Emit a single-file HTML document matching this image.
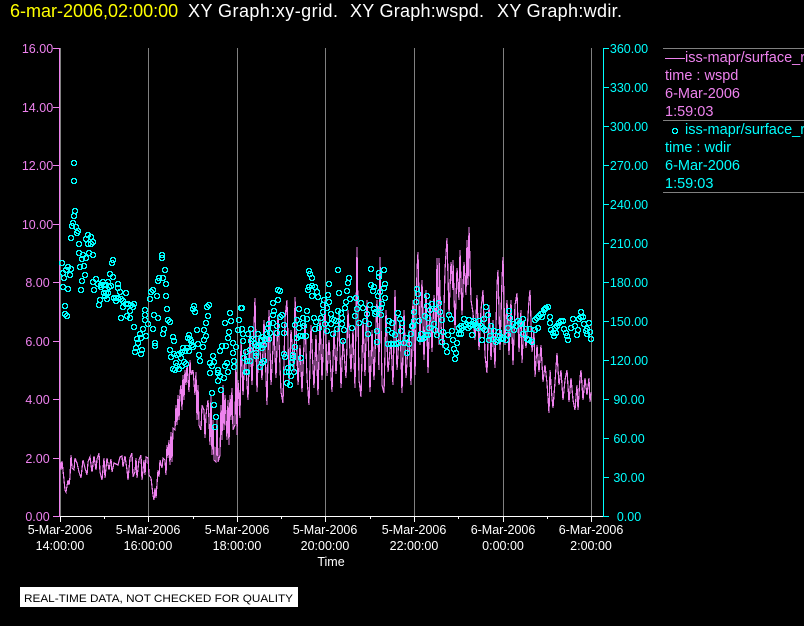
<!DOCTYPE html>
<html><head><meta charset="utf-8"><title>XY Graph</title>
<style>
html,body{margin:0;padding:0;background:#000;width:804px;height:626px;overflow:hidden}
svg{display:block}
text{font-family:"Liberation Sans",sans-serif}
.l{font-size:12.5px;fill:#ee82ee;text-anchor:middle}
.r{font-size:12.5px;fill:#0ff;text-anchor:middle}
.x{font-size:12.5px;fill:#fff;text-anchor:middle}
.g{font-size:14.5px}
</style></head><body>
<svg width="804" height="626" viewBox="0 0 804 626" xmlns="http://www.w3.org/2000/svg">
<defs><marker id="m" markerUnits="userSpaceOnUse" markerWidth="7" markerHeight="7" refX="2.5" refY="2.5" overflow="visible"><path shape-rendering="crispEdges" fill="#0ff" fill-rule="evenodd" d="M1 0H5V1H6V5H5V6H1V5H0V1H1ZM2 1H4V2H5V4H4V5H2V4H1V2H2Z"/></marker></defs>
<rect width="804" height="626" fill="#000"/>
<text x="10" y="17" font-size="18" fill="#ff0">6-mar-2006,02:00:00</text>
<text x="188" y="17" font-size="18" fill="#fff" textLength="150">XY Graph:xy-grid.</text>
<text x="350" y="17" font-size="18" fill="#fff" textLength="134">XY Graph:wspd.</text>
<text x="497" y="17" font-size="18" fill="#fff" textLength="125">XY Graph:wdir.</text>
<g fill="#808080"><rect x="60" y="48" width="1" height="468"/><rect x="148" y="48" width="1" height="468"/><rect x="237" y="48" width="1" height="468"/><rect x="325" y="48" width="1" height="468"/><rect x="414" y="48" width="1" height="468"/><rect x="503" y="48" width="1" height="468"/><rect x="591" y="48" width="1" height="468"/>
<rect x="663" y="48" width="141" height="1"/><rect x="663" y="120" width="141" height="1"/><rect x="663" y="192" width="141" height="1"/></g>
<rect x="59" y="48" width="1" height="469" fill="#ee82ee"/>
<g fill="#ee82ee"><rect x="53" y="48" width="6" height="1"/><rect x="53" y="107" width="6" height="1"/><rect x="53" y="165" width="6" height="1"/><rect x="53" y="224" width="6" height="1"/><rect x="53" y="282" width="6" height="1"/><rect x="53" y="341" width="6" height="1"/><rect x="53" y="399" width="6" height="1"/><rect x="53" y="458" width="6" height="1"/><rect x="53" y="516" width="6" height="1"/></g>
<g class="l"><text class="l" x="37.5" y="53">16.00</text><text class="l" x="37.5" y="112">14.00</text><text class="l" x="37.5" y="170">12.00</text><text class="l" x="37.5" y="229">10.00</text><text class="l" x="37.5" y="287">8.00</text><text class="l" x="37.5" y="346">6.00</text><text class="l" x="37.5" y="404">4.00</text><text class="l" x="37.5" y="463">2.00</text><text class="l" x="37.5" y="521">0.00</text></g>
<rect x="603" y="48" width="1" height="469" fill="#0ff"/>
<g fill="#0ff"><rect x="604" y="48" width="5" height="1"/><rect x="604" y="87" width="5" height="1"/><rect x="604" y="126" width="5" height="1"/><rect x="604" y="165" width="5" height="1"/><rect x="604" y="204" width="5" height="1"/><rect x="604" y="243" width="5" height="1"/><rect x="604" y="282" width="5" height="1"/><rect x="604" y="321" width="5" height="1"/><rect x="604" y="360" width="5" height="1"/><rect x="604" y="399" width="5" height="1"/><rect x="604" y="438" width="5" height="1"/><rect x="604" y="477" width="5" height="1"/><rect x="604" y="516" width="5" height="1"/></g>
<text class="r" x="629" y="53">360.00</text><text class="r" x="629" y="92">330.00</text><text class="r" x="629" y="131">300.00</text><text class="r" x="629" y="170">270.00</text><text class="r" x="629" y="209">240.00</text><text class="r" x="629" y="248">210.00</text><text class="r" x="629" y="287">180.00</text><text class="r" x="629" y="326">150.00</text><text class="r" x="629" y="365">120.00</text><text class="r" x="629" y="404">90.00</text><text class="r" x="629" y="443">60.00</text><text class="r" x="629" y="482">30.00</text><text class="r" x="629" y="521">0.00</text>
<rect x="60" y="516" width="543" height="1" fill="#fff"/>
<g fill="#fff"><rect x="60" y="517" width="1" height="5"/><rect x="148" y="517" width="1" height="5"/><rect x="237" y="517" width="1" height="5"/><rect x="325" y="517" width="1" height="5"/><rect x="414" y="517" width="1" height="5"/><rect x="503" y="517" width="1" height="5"/><rect x="591" y="517" width="1" height="5"/><rect x="104" y="517" width="1" height="2"/><rect x="193" y="517" width="1" height="2"/><rect x="281" y="517" width="1" height="2"/><rect x="370" y="517" width="1" height="2"/><rect x="458" y="517" width="1" height="2"/><rect x="547" y="517" width="1" height="2"/></g>
<text class="x" x="60" y="534">5-Mar-2006</text><text class="x" x="60" y="550">14:00:00</text>
<text class="x" x="148" y="534">5-Mar-2006</text><text class="x" x="148" y="550">16:00:00</text>
<text class="x" x="237" y="534">5-Mar-2006</text><text class="x" x="237" y="550">18:00:00</text>
<text class="x" x="325" y="534">5-Mar-2006</text><text class="x" x="325" y="550">20:00:00</text>
<text class="x" x="414" y="534">5-Mar-2006</text><text class="x" x="414" y="550">22:00:00</text>
<text class="x" x="503" y="534">6-Mar-2006</text><text class="x" x="503" y="550">0:00:00</text>
<text class="x" x="591" y="534">6-Mar-2006</text><text class="x" x="591" y="550">2:00:00</text>
<text class="x" x="331" y="566">Time</text>
<polyline fill="none" stroke="#ee82ee" stroke-width="1.2" shape-rendering="crispEdges" points="60,462 61,470 62,461 64,480 65,490 66,492 68,480 69,485 70,477 71,455 72,468 74,470 75,458 77,463 79,472 81,478 83,460 85,468 87,475 88,462 90,457 92,472 94,456 96,470 97,459 99,453 100,472 102,480 104,458 105,478 107,458 109,470 111,459 112,472 114,463 116,464 118,465 120,457 122,456 123,467 125,456 127,470 128,480 130,458 132,453 133,477 135,472 136,458 137,478 139,460 141,455 142,480 144,460 145,475 146,457 148,458 149,475 151,478 153,495 154,500 155,488 156,498 158,470 159,477 160,460 162,468 163,458 165,460 166,475 167,445 168,458 169,440 170,465 171,432 172,462 173,428 175,430 176,405 177,425 178,395 179,420 180,392 181,385 182,410 183,375 184,400 185,370 186,385 187,365 188,378 189,392 190,360 191,375 193,370 195,395 196,372 197,420 198,385 199,425 201,430 202,405 204,410 205,438 206,415 208,400 209,420 210,445 211,395 212,455 213,420 214,460 216,462 217,420 218,462 220,455 221,405 222,440 223,385 224,430 225,395 227,440 228,400 229,445 230,395 231,420 232,388 233,430 235,425 236,360 237,435 238,380 240,418 241,340 243,395 245,350 248,400 250,330 252,385 255,298 257,392 259,335 262,380 264,320 267,405 269,310 271,385 274,330 276,378 278,315 281,392 283,403 285,318 287,300 289,384 291,330 294,372 295,297 298,385 300,345 302,392 305,320 307,378 309,405 311,325 314,388 316,335 318,395 320,318 322,380 325,300 327,376 329,340 332,392 334,330 336,374 339,315 341,388 343,340 346,378 348,310 351,372 353,330 355,388 357,247 359,380 361,397 363,320 365,376 367,300 370,392 372,330 374,380 377,300 379,370 380,257 382,385 384,393 386,310 388,372 391,340 393,385 395,290 397,370 400,320 402,393 404,310 406,378 409,330 411,385 413,300 415,375 417,270 418,252 420,345 422,280 424,360 426,290 428,373 430,300 432,352 434,295 436,335 437,258 439,345 439,258 441,325 443,348 445,270 447,238 449,315 451,262 453,290 453,260 455,330 457,268 459,300 460,250 462,315 464,262 466,295 467,240 468,285 469,227 471,300 473,313 475,340 477,295 479,350 481,310 483,290 485,355 487,373 489,305 491,360 493,320 495,368 497,285 498,270 500,350 502,280 503,257 505,345 507,300 509,355 511,300 513,365 515,305 517,293 519,352 521,310 522,363 524,320 526,348 529,300 530,290 532,352 534,330 535,377 537,345 539,372 541,345 543,382 545,365 547,383 549,413 550,370 552,398 553,408 555,382 557,353 559,385 561,370 563,400 565,380 567,370 569,402 571,378 573,400 575,410 577,385 578,410 580,378 581,370 583,400 585,378 587,395 589,378 590,402 591,392"/>
<polyline fill="none" stroke="none" marker-start="url(#m)" marker-mid="url(#m)" marker-end="url(#m)" points="73.5,162.5 73.5,180.5 74.5,210.5 73.5,215.5 72.5,222.5 71.5,225.5 75.5,226.5 77.5,230.5 76.5,232.5 70.5,237.5 78.5,243.5 87.5,234.5 90.5,236.5 85.5,238.5 92.5,241.5 87.5,243.5 90.5,243.5 78.5,252.5 82.5,254.5 85.5,257.5 81.5,258.5 88.5,252.5 92.5,254.5 61.5,262.5 111.5,262.5 112.5,259.5 79.5,266.5 83.5,265.5 67.5,266.5 70.5,268.5 65.5,269.5 62.5,272.5 69.5,274.5 63.5,277.5 84.5,274.5 81.5,280.5 109.5,273.5 112.5,276.5 95.5,278.5 92.5,281.5 102.5,281.5 107.5,281.5 117.5,283.5 97.5,283.5 100.5,286.5 108.5,286.5 93.5,289.5 80.5,289.5 62.5,286.5 67.5,288.5 117.5,287.5 119.5,291.5 125.5,292.5 103.5,292.5 104.5,295.5 113.5,297.5 106.5,298.5 120.5,298.5 99.5,299.5 98.5,304.5 115.5,300.5 122.5,306.5 127.5,303.5 133.5,303.5 132.5,306.5 64.5,305.5 64.5,313.5 66.5,315.5 129.5,310.5 126.5,315.5 129.5,317.5 120.5,317.5 144.5,309.5 144.5,314.5 153.5,314.5 157.5,317.5 144.5,319.5 147.5,323.5 152.5,328.5 133.5,326.5 142.5,328.5 139.5,333.5 145.5,335.5 140.5,337.5 136.5,338.5 137.5,342.5 135.5,347.5 134.5,351.5 141.5,349.5 140.5,353.5 154.5,342.5 154.5,345.5 163.5,328.5 162.5,333.5 167.5,319.5 169.5,321.5 166.5,308.5 149.5,298.5 156.5,295.5 165.5,295.5 150.5,291.5 152.5,289.5 157.5,280.5 165.5,283.5 158.5,277.5 162.5,277.5 164.5,269.5 161.5,254.5 161.5,257.5 193.5,305.5 192.5,308.5 194.5,311.5 206.5,306.5 208.5,304.5 207.5,315.5 205.5,322.5 224.5,322.5 230.5,320.5 229.5,312.5 240.5,307.5 238.5,319.5 228.5,331.5 227.5,337.5 232.5,342.5 225.5,345.5 221.5,345.5 219.5,350.5 235.5,346.5 232.5,352.5 243.5,357.5 237.5,329.5 241.5,328.5 172.5,336.5 173.5,340.5 188.5,334.5 189.5,338.5 191.5,344.5 196.5,329.5 203.5,329.5 205.5,335.5 203.5,339.5 197.5,343.5 202.5,346.5 186.5,347.5 182.5,347.5 169.5,349.5 173.5,353.5 178.5,353.5 170.5,356.5 180.5,357.5 198.5,354.5 212.5,355.5 199.5,360.5 175.5,362.5 185.5,363.5 209.5,362.5 213.5,361.5 211.5,365.5 226.5,362.5 224.5,365.5 233.5,360.5 233.5,366.5 174.5,369.5 178.5,368.5 181.5,365.5 183.5,361.5 217.5,369.5 211.5,392.5 220.5,389.5 213.5,404.5 215.5,416.5 214.5,426.5 209.5,372.5 217.5,380.5 217.5,372.5 227.5,371.5 223.5,377.5 219.5,375.5 245.5,371.5 308.5,270.5 309.5,273.5 311.5,277.5 311.5,285.5 314.5,286.5 308.5,286.5 307.5,289.5 316.5,291.5 311.5,295.5 317.5,296.5 323.5,299.5 322.5,304.5 328.5,301.5 327.5,294.5 328.5,283.5 337.5,269.5 348.5,277.5 347.5,282.5 346.5,290.5 338.5,292.5 355.5,297.5 345.5,301.5 349.5,298.5 344.5,307.5 326.5,307.5 277.5,289.5 279.5,290.5 272.5,302.5 277.5,299.5 241.5,307.5 298.5,308.5 306.5,310.5 273.5,310.5 281.5,314.5 272.5,314.5 279.5,316.5 296.5,319.5 302.5,317.5 306.5,318.5 313.5,317.5 315.5,321.5 322.5,311.5 320.5,317.5 330.5,313.5 337.5,310.5 340.5,312.5 341.5,317.5 335.5,320.5 294.5,324.5 298.5,327.5 303.5,325.5 302.5,322.5 314.5,328.5 318.5,327.5 324.5,323.5 330.5,323.5 336.5,328.5 341.5,323.5 343.5,329.5 326.5,330.5 332.5,333.5 272.5,322.5 268.5,323.5 283.5,324.5 276.5,325.5 267.5,327.5 283.5,332.5 276.5,332.5 269.5,332.5 266.5,333.5 257.5,333.5 250.5,328.5 247.5,333.5 241.5,328.5 242.5,333.5 242.5,340.5 252.5,338.5 260.5,339.5 268.5,338.5 254.5,343.5 263.5,344.5 261.5,347.5 249.5,349.5 245.5,351.5 255.5,352.5 243.5,357.5 255.5,355.5 263.5,360.5 249.5,360.5 246.5,360.5 261.5,362.5 259.5,366.5 246.5,371.5 302.5,335.5 305.5,335.5 296.5,337.5 299.5,335.5 294.5,346.5 283.5,353.5 284.5,356.5 292.5,354.5 292.5,357.5 300.5,357.5 291.5,361.5 293.5,371.5 287.5,367.5 290.5,367.5 285.5,371.5 288.5,371.5 290.5,375.5 286.5,382.5 289.5,384.5 342.5,340.5 370.5,268.5 383.5,269.5 378.5,272.5 378.5,276.5 370.5,284.5 373.5,286.5 384.5,283.5 383.5,287.5 372.5,290.5 379.5,291.5 377.5,295.5 384.5,297.5 381.5,303.5 380.5,307.5 369.5,304.5 373.5,308.5 375.5,311.5 374.5,313.5 360.5,302.5 356.5,308.5 362.5,307.5 366.5,313.5 354.5,315.5 358.5,322.5 364.5,320.5 368.5,323.5 351.5,327.5 367.5,333.5 376.5,330.5 376.5,341.5 397.5,312.5 388.5,320.5 391.5,322.5 399.5,318.5 401.5,322.5 387.5,329.5 391.5,332.5 400.5,330.5 394.5,334.5 410.5,333.5 405.5,337.5 387.5,343.5 390.5,343.5 393.5,343.5 396.5,343.5 398.5,342.5 403.5,342.5 408.5,343.5 406.5,352.5 413.5,311.5 418.5,320.5 413.5,320.5 412.5,325.5 416.5,288.5 417.5,293.5 415.5,301.5 426.5,295.5 411.5,325.5 431.5,303.5 426.5,305.5 438.5,302.5 429.5,309.5 435.5,308.5 439.5,311.5 424.5,315.5 427.5,317.5 433.5,323.5 428.5,327.5 441.5,319.5 448.5,314.5 450.5,318.5 434.5,329.5 436.5,334.5 420.5,333.5 427.5,334.5 419.5,338.5 423.5,337.5 421.5,338.5 442.5,331.5 447.5,334.5 451.5,330.5 441.5,341.5 452.5,339.5 456.5,342.5 445.5,345.5 453.5,348.5 446.5,351.5 455.5,352.5 454.5,358.5 485.5,306.5 487.5,314.5 463.5,318.5 468.5,319.5 473.5,320.5 478.5,320.5 483.5,318.5 458.5,327.5 460.5,325.5 463.5,325.5 465.5,324.5 467.5,327.5 469.5,325.5 472.5,324.5 475.5,325.5 477.5,327.5 480.5,325.5 484.5,329.5 490.5,325.5 458.5,333.5 460.5,333.5 471.5,334.5 481.5,339.5 488.5,339.5 493.5,330.5 498.5,331.5 492.5,338.5 495.5,341.5 497.5,339.5 500.5,338.5 502.5,337.5 505.5,339.5 507.5,334.5 508.5,310.5 509.5,317.5 522.5,318.5 507.5,327.5 513.5,329.5 517.5,320.5 519.5,322.5 512.5,323.5 520.5,323.5 525.5,328.5 522.5,333.5 526.5,338.5 528.5,339.5 531.5,341.5 529.5,328.5 534.5,329.5 537.5,327.5 534.5,319.5 536.5,317.5 538.5,315.5 540.5,313.5 542.5,312.5 543.5,309.5 545.5,307.5 547.5,306.5 549.5,316.5 549.5,322.5 550.5,329.5 552.5,332.5 553.5,335.5 555.5,332.5 554.5,327.5 556.5,325.5 558.5,322.5 560.5,320.5 562.5,320.5 563.5,328.5 565.5,332.5 566.5,335.5 567.5,339.5 570.5,327.5 572.5,318.5 576.5,334.5 577.5,329.5 578.5,318.5 580.5,316.5 582.5,316.5 580.5,311.5 583.5,323.5 586.5,328.5 588.5,322.5 586.5,333.5 589.5,331.5 590.5,338.5 100.5,284.5 103.5,284.5 105.5,284.5 110.5,285.5 105.5,292.5 107.5,292.5 115.5,297.5 117.5,297.5 122.5,300.5 125.5,303.5 130.5,304.5 184.5,350.5 188.5,350.5 176.5,354.5 181.5,351.5 190.5,340.5 192.5,346.5 187.5,337.5 176.5,365.5 172.5,368.5 331.5,318.5 333.5,319.5 380.5,314.5 544.5,308.5 425.5,334.5 585.5,330.5 250.5,340.5 256.5,345.5 258.5,345.5 262.5,336.5 264.5,338.5 461.5,327.5 474.5,322.5 482.5,327.5 489.5,335.5 499.5,335.5 515.5,325.5 541.5,316.5 574.5,325.5"/>
<rect x="665" y="58" width="20" height="1" fill="#ee82ee"/>
<text class="g" x="685" y="62" fill="#ee82ee">iss-mapr/surface_r</text>
<text class="g" x="665" y="80" fill="#ee82ee">time : wspd</text>
<text class="g" x="665" y="98" fill="#ee82ee">6-Mar-2006</text>
<text class="g" x="665" y="116" fill="#ee82ee">1:59:03</text>
<path shape-rendering="crispEdges" transform="translate(672 128)" fill="#0ff" fill-rule="evenodd" d="M1 0H5V1H6V5H5V6H1V5H0V1H1ZM2 1H4V2H5V4H4V5H2V4H1V2H2Z"/>
<text class="g" x="685" y="134" fill="#0ff">iss-mapr/surface_r</text>
<text class="g" x="665" y="152" fill="#0ff">time : wdir</text>
<text class="g" x="665" y="170" fill="#0ff">6-Mar-2006</text>
<text class="g" x="665" y="188" fill="#0ff">1:59:03</text>
<rect x="20" y="587" width="278" height="20" fill="#fff"/>
<text x="24" y="602" font-size="11.3" fill="#000" textLength="269" lengthAdjust="spacingAndGlyphs">REAL-TIME DATA, NOT CHECKED FOR QUALITY</text>
</svg>
</body></html>
